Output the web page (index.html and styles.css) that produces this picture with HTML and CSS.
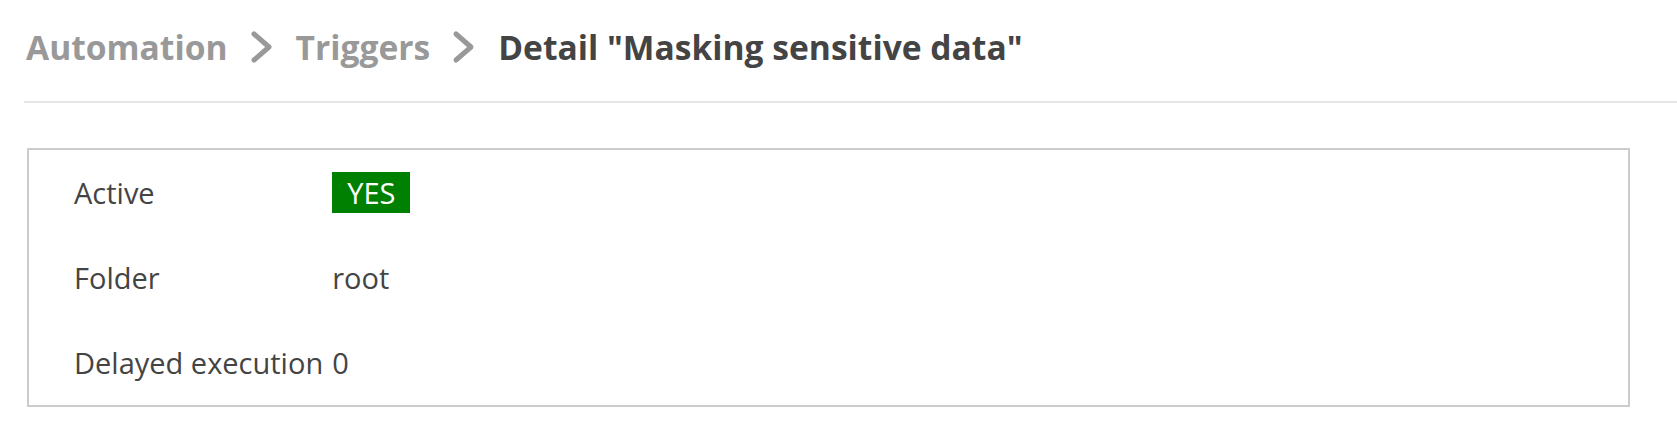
FILE: index.html
```html
<!DOCTYPE html>
<html>
<head>
<meta charset="utf-8">
<link rel="stylesheet" href="styles.css">
</head>
<body>
<div class="page">
  <header class="header">
    <nav class="crumbs">
      <span class="crumb">Automation</span>
      <svg class="chev" viewBox="0 0 24 34" width="24" height="34"><path d="M4 4 L19 17 L4 30" fill="none" stroke="#999" stroke-width="5" stroke-linecap="round" stroke-linejoin="round"/></svg>
      <span class="crumb">Triggers</span>
      <svg class="chev" viewBox="0 0 24 34" width="24" height="34"><path d="M4 4 L19 17 L4 30" fill="none" stroke="#999" stroke-width="5" stroke-linecap="round" stroke-linejoin="round"/></svg>
      <span class="crumb current">Detail "Masking sensitive data"</span>
    </nav>
  </header>
  <section class="card">
    <div class="label">Active</div><div class="value"><span class="badge">YES</span></div>
    <div class="label">Folder</div><div class="value">root</div>
    <div class="label">Delayed execution</div><div class="value">0</div>
  </section>
</div>
</body>
</html>
```
FILE: styles.css
```css
html, body { margin: 0; padding: 0; background: #fff; }
body { font-family: "Open Sans", "Noto Sans", sans-serif; color: #444; }
.page { padding-left: 24px; }
.header { border-bottom: 2px solid #e5e5e5; height: 101px; display: flex; align-items: center; }
.crumbs { display: flex; align-items: center; gap: 22px; padding-left: 2px; margin-top: -7px; }
.crumb { font-size: 33.6px; font-weight: 700; color: #999; }
.crumb.current { color: #444; }
.chev { display: block; }
.card { margin: 45px 47px 0 3px; border: 2px solid #ccc; padding: 0 0 0 45px;
  display: grid; grid-template-columns: max-content 1fr; grid-auto-rows: 85px; align-items: center; font-size: 29px; }
.label { padding-right: 9px; }
.badge { display: inline-block; background: #008000; color: #fff; padding: 0 15px; line-height: 41px; }
```
